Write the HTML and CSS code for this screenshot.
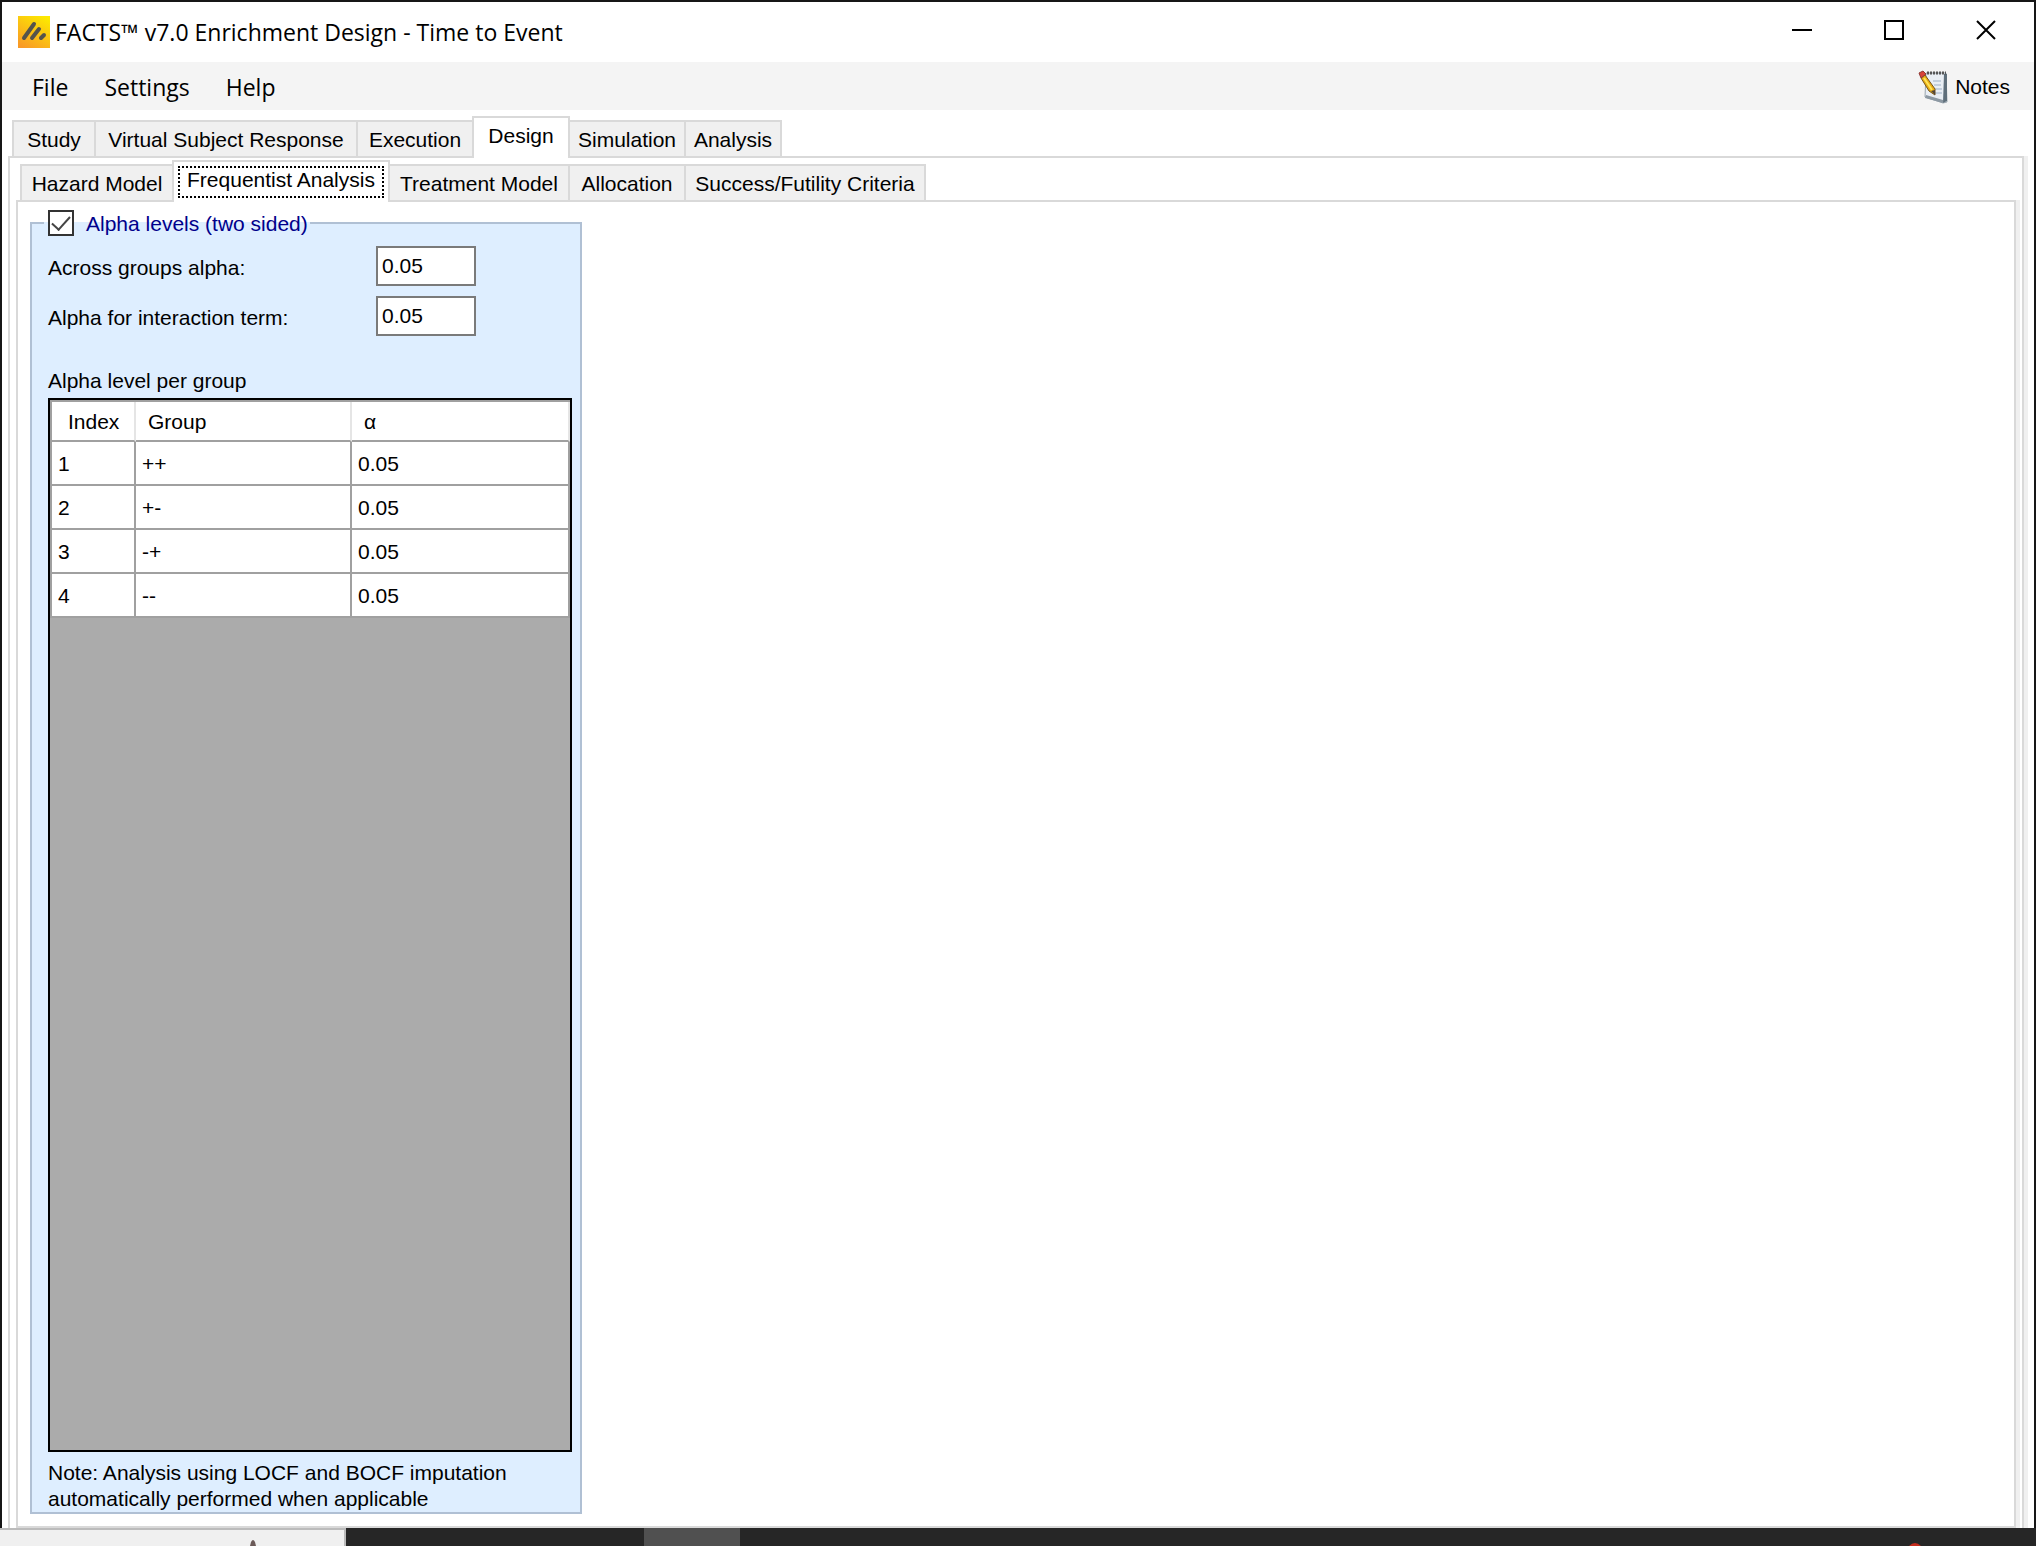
FILE: index.html
```html
<!DOCTYPE html>
<html lang="en">
<head>
  <meta charset="UTF-8" />
  <title>FACTS™ v7.0 Enrichment Design - Time to Event</title>
  <link rel="stylesheet" href="styles.css">
</head>
<body>
  <div class="window">
    <header class="titlebar">
      <svg class="logo" viewBox="0 0 32 32" aria-hidden="true">
        <defs>
          <linearGradient id="logoFill" x1="0.8" y1="0" x2="0.2" y2="1">
            <stop offset="0" stop-color="#fde900" />
            <stop offset="1" stop-color="#f99a26" />
          </linearGradient>
        </defs>
        <rect width="32" height="32" fill="url(#logoFill)" />
        <g stroke="#55534c" stroke-width="4" stroke-linecap="round">
          <path d="M6 22 L16 8" />
          <path d="M14 22 L21 13" />
          <path d="M23 22 L26 19" />
        </g>
      </svg>
      <h1>FACTS™ v7.0 Enrichment Design - Time to Event</h1>
      <div class="window-buttons">
        <button aria-label="Minimize"><svg width="20" height="20" viewBox="0 0 20 20"><path d="M0 10H20" /></svg></button>
        <button aria-label="Maximize"><svg width="20" height="20" viewBox="0 0 20 20"><path d="M1 1H19V19H1Z" /></svg></button>
        <button aria-label="Close"><svg width="20" height="20" viewBox="0 0 20 20"><path d="M1 1L19 19M19 1L1 19" /></svg></button>
      </div>
    </header>

    <nav class="menubar">
      <button>File</button>
      <button>Settings</button>
      <button>Help</button>
      <button class="notes">
        <svg width="32" height="34" viewBox="0 0 32 34" aria-hidden="true">
          <path d="M9 3H29L30 32L26 33L8 27Z" fill="#e9eef4" stroke="#9aa5ae" />
          <path d="M27 4H30V31L26 33Z" fill="#5f6f7b" />
          <path d="M9 25L26 30V33L8 28Z" fill="#8d99a3" />
          <path d="M10 3H29" stroke="#555" stroke-width="3" stroke-dasharray="2 1" />
          <path d="M16 11H24M17 15H24M18 19H25M18 23H25" stroke="#c3cfdd" stroke-width="2" />
          <path d="M4 8L8 5L18 19V25L12 21Z" fill="#e9ae12" stroke="#76551c" />
          <path d="M7 8L15 20" stroke="#ffe45a" stroke-width="2" />
          <path d="M14 21L18 20V25Z" fill="#54463a" />
          <path d="M2 3L6 1L9 4L4 8Z" fill="#d94438" stroke="#8f3a35" />
        </svg>
        Notes
      </button>
    </nav>

    <main class="workspace">
      <div class="tabs" role="tablist">
        <button role="tab" class="tab-study">Study</button>
        <button role="tab" class="tab-response">Virtual Subject Response</button>
        <button role="tab" class="tab-execution">Execution</button>
        <button role="tab" class="tab-design selected" aria-selected="true">Design</button>
        <button role="tab" class="tab-simulation">Simulation</button>
        <button role="tab" class="tab-analysis">Analysis</button>
      </div>

      <section class="panel">
        <div class="tabs" role="tablist">
          <button role="tab" class="tab-hazard">Hazard Model</button>
          <button role="tab" class="tab-frequentist selected focused" aria-selected="true">Frequentist Analysis</button>
          <button role="tab" class="tab-treatment">Treatment Model</button>
          <button role="tab" class="tab-allocation">Allocation</button>
          <button role="tab" class="tab-criteria">Success/Futility Criteria</button>
        </div>

        <section class="panel inner">
          <fieldset class="group">
            <legend>
              <input type="checkbox" id="alphaLevels" checked />
              <label for="alphaLevels">Alpha levels (two sided)</label>
            </legend>
            <div class="field">
              <label for="acrossAlpha">Across groups alpha:</label>
              <input type="text" id="acrossAlpha" value="0.05" />
            </div>
            <div class="field">
              <label for="interactionAlpha">Alpha for interaction term:</label>
              <input type="text" id="interactionAlpha" value="0.05" />
            </div>
            <p class="grid-label" id="gridLabel">Alpha level per group</p>
            <div class="grid">
              <table aria-labelledby="gridLabel">
                <thead>
                  <tr><th class="col-index">Index</th><th class="col-group">Group</th><th>α</th></tr>
                </thead>
                <tbody>
                  <tr><td>1</td><td>++</td><td>0.05</td></tr>
                  <tr><td>2</td><td>+-</td><td>0.05</td></tr>
                  <tr><td>3</td><td>-+</td><td>0.05</td></tr>
                  <tr><td>4</td><td>--</td><td>0.05</td></tr>
                </tbody>
              </table>
            </div>
            <p class="note">Note: Analysis using LOCF and BOCF imputation automatically performed when applicable</p>
          </fieldset>
        </section>
      </section>
    </main>
  </div>

  <footer class="taskbar">
    <div class="search">
      <svg width="10" height="6" viewBox="0 0 10 6"><path d="M2 6L3 2Q5 -2 7 2L8 6Z" fill="#6b5a58" /></svg>
    </div>
    <div class="task"></div>
    <svg class="alert" width="12" height="3" viewBox="0 0 12 3"><path d="M0 3Q6 -3 12 3Z" fill="#c42b1c" /></svg>
  </footer>
</body>
</html>
```

FILE: styles.css
```css
* {
  box-sizing: border-box;
}
body {
  margin: 0;
  height: 100vh;
  display: flex;
  flex-direction: column;
  font-family: "Liberation Sans", Arial, sans-serif;
  font-size: 21px;
  color: #000;
  background: #262626;
}
button, input {
  font: inherit;
  color: inherit;
}
.window {
  flex: 1;
  min-height: 0;
  display: flex;
  flex-direction: column;
  background: #fff;
  border: 2px solid #161616;
  border-bottom: none;
}

/* title bar */
.titlebar {
  height: 60px;
  display: flex;
  align-items: center;
  padding-left: 16px;
}
.logo {
  width: 32px;
  height: 32px;
}
.titlebar h1 {
  margin: 0 0 0 5px;
  font-family: "Open Sans", "Segoe UI", sans-serif;
  font-size: 23px;
  font-weight: normal;
}
.window-buttons {
  display: flex;
  align-self: flex-start;
  margin-left: auto;
  margin-right: 2px;
}
.window-buttons button {
  width: 92px;
  height: 56px;
  display: flex;
  align-items: center;
  justify-content: center;
  padding: 0;
  background: none;
  border: none;
}
.window-buttons path {
  fill: none;
  stroke: #000;
  stroke-width: 2;
}

/* menu */
.menubar {
  height: 48px;
  display: flex;
  align-items: center;
  padding: 2px 24px 0 12px;
  background: #f4f4f4;
}
.menubar button {
  padding: 0 18px;
  background: none;
  border: none;
  font-family: "Open Sans", "Segoe UI", sans-serif;
  font-size: 23px;
}
.menubar .notes {
  display: flex;
  align-items: center;
  gap: 6px;
  margin-left: auto;
  padding: 0;
  font-family: "Liberation Sans", Arial, sans-serif;
  font-size: 21px;
}

/* tabs */
.workspace {
  flex: 1;
  min-height: 0;
  display: flex;
  flex-direction: column;
  padding: 6px 10px 0 6px;
}
.tabs {
  display: flex;
  align-items: flex-end;
  height: 40px;
  padding-left: 4px;
}
.tabs button {
  height: 38px;
  margin: 0 0 -2px -2px;
  padding: 2px 0 0;
  background: #f0f0f0;
  border: 2px solid #d9d9d9;
  white-space: nowrap;
}
.tabs button:first-child {
  margin-left: 0;
}
.tabs .selected {
  position: relative;
  height: 42px;
  padding: 0 0 4px;
  background: #fff;
  border-bottom: none;
}
.tabs .focused::after {
  content: "";
  position: absolute;
  inset: 4px;
  border: 2px dotted #000;
}
.tab-study {
  width: 84px;
}
.tab-response {
  width: 264px;
}
.tab-design, .tab-analysis {
  width: 98px;
}
.tab-execution, .tab-simulation, .tab-allocation {
  width: 118px;
}
.tab-hazard {
  width: 154px;
}
.tab-frequentist {
  width: 218px;
}
.tab-treatment {
  width: 182px;
}
.tab-criteria {
  width: 242px;
}
.panel {
  flex: 1;
  min-height: 0;
  display: flex;
  flex-direction: column;
  padding: 2px 6px 0;
  border: 2px solid #d9d9d9;
  border-bottom: none;
  box-shadow: 4px 0 0 #f0f0f0;
}
.panel.inner {
  align-items: flex-start;
  padding: 7px 12px 12px;
  border-bottom: 2px solid #d9d9d9;
}

/* alpha levels */
.group {
  flex: 1;
  min-height: 0;
  width: 552px;
  display: flex;
  flex-direction: column;
  margin: 0;
  padding: 9px 8px 0 16px;
  background: #deeeff;
  border: 2px solid #b0c0d4;
}
.group legend {
  height: 28px;
  display: flex;
  align-items: center;
  gap: 12px;
  margin-left: -4px;
  padding: 0 2px 0 4px;
  color: #00008b;
}
.group legend label {
  padding-top: 2px;
}
.group legend input {
  appearance: none;
  width: 26px;
  height: 26px;
  margin: 0;
  border: 2px solid #333;
  background: #fff;
  display: grid;
  place-items: center;
}
.group legend input:checked::before {
  content: "";
  width: 8px;
  height: 16px;
  margin-top: -4px;
  border: solid #444;
  border-width: 0 2px 2px 0;
  transform: rotate(42deg);
}
.field {
  display: flex;
  align-items: center;
  margin-bottom: 10px;
}
.field label {
  width: 328px;
  padding-top: 4px;
}
.field input {
  width: 100px;
  height: 40px;
  padding: 0 4px;
  background: #fff;
  border: 2px solid #7a7a7a;
}
.grid-label {
  margin: 22px 0 4px;
  line-height: 26px;
}
.grid {
  flex: 1;
  min-height: 0;
  background: #ababab;
  border: 2px solid #000;
}
.grid table {
  width: 100%;
  table-layout: fixed;
  border-collapse: separate;
  border-spacing: 0;
  background: #fff;
  border: solid #a0a0a0;
  border-width: 2px 0 0 2px;
}
.grid th {
  height: 40px;
  padding: 2px 12px 0;
  text-align: left;
  font-weight: normal;
  border: solid #a0a0a0;
  border-width: 0 2px 2px 0;
  border-right-color: #e5e5e5;
}
.grid .col-index {
  width: 84px;
  padding-left: 16px;
  padding-right: 0;
}
.grid .col-group {
  width: 216px;
}
.grid td {
  height: 44px;
  padding: 2px 6px 0;
  border: solid #a0a0a0;
  border-width: 0 2px 2px 0;
}
.note {
  margin: 8px 0 0;
  line-height: 26px;
}

/* taskbar */
.taskbar {
  height: 18px;
  display: flex;
  align-items: flex-end;
  padding-right: 115px;
}
.search {
  width: 346px;
  height: 18px;
  display: flex;
  align-items: flex-end;
  padding-left: 248px;
  background: #f0f0f0;
  border: solid #bbb;
  border-width: 2px 2px 0 0;
}
.task {
  width: 96px;
  height: 18px;
  margin-left: 298px;
  background: #505050;
}
.alert {
  margin-left: auto;
}
```
